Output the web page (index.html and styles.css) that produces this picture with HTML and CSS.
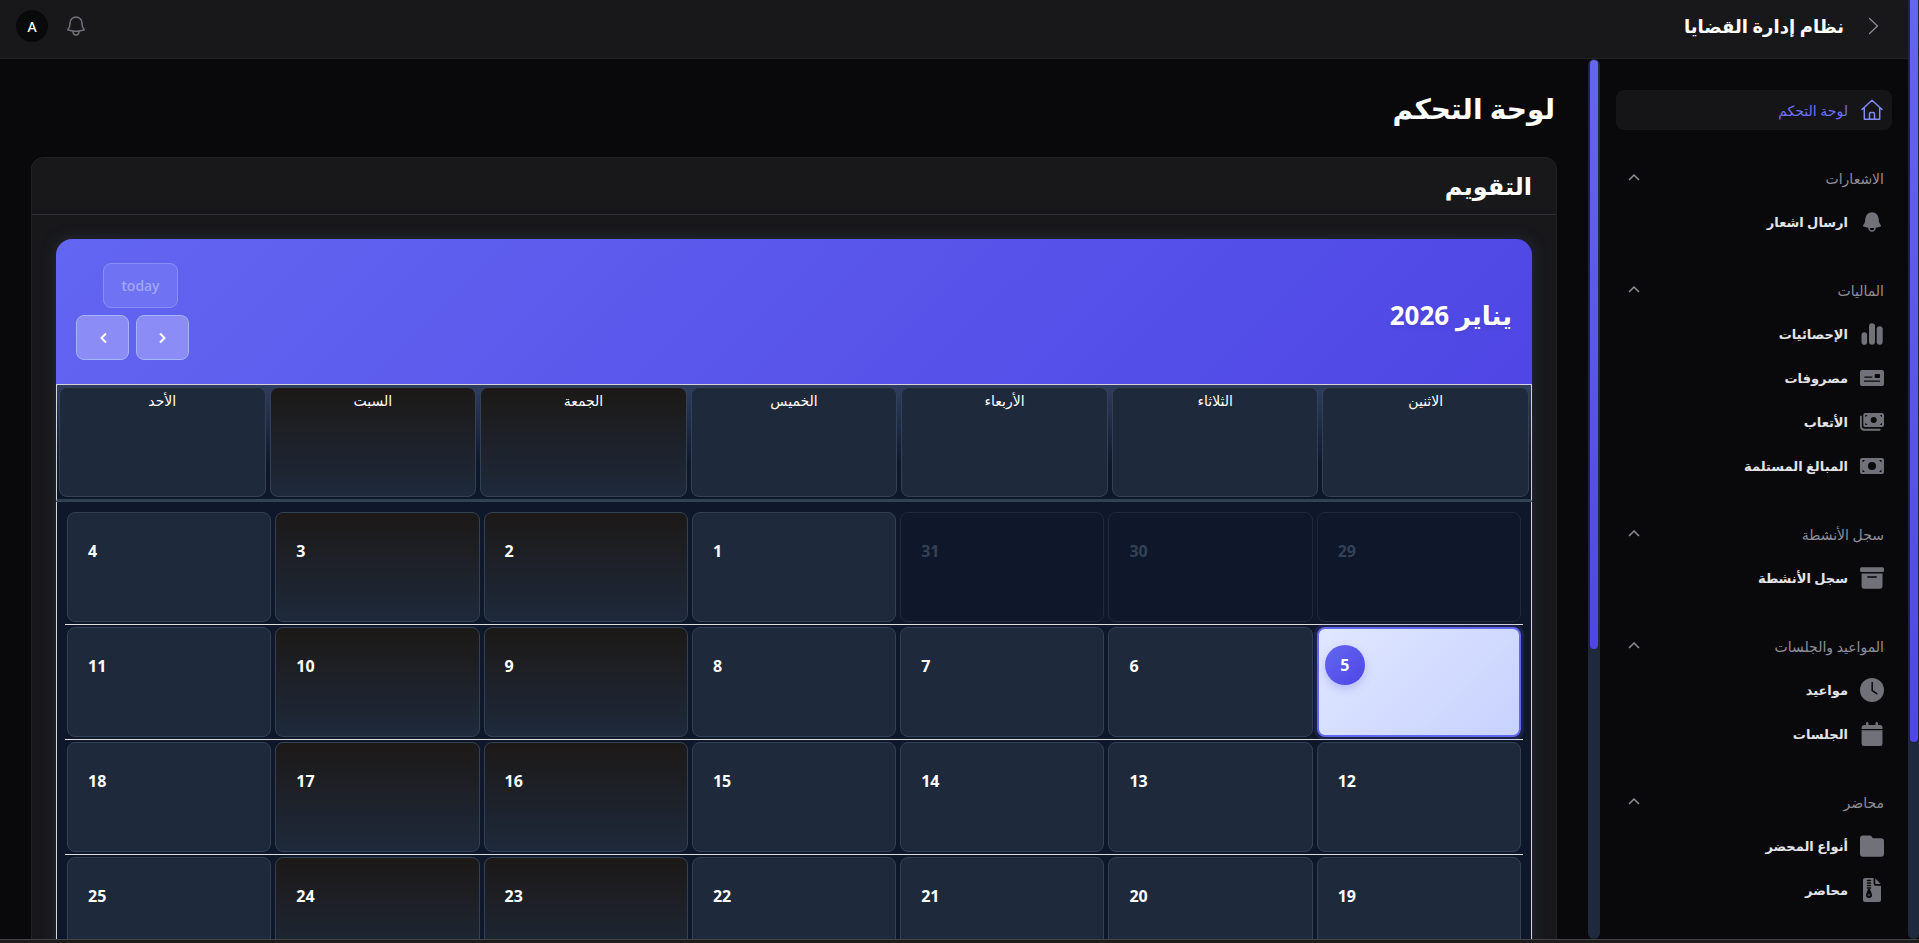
FILE: index.html
```html
<!DOCTYPE html>
<html lang="ar" dir="rtl">
<head>
<meta charset="utf-8">
<meta name="viewport" content="width=device-width, initial-scale=1">
<title>لوحة التحكم</title>
<link rel="stylesheet" href="styles.css">
</head>
<body>
<div class="window">
  <div class="scrollbar page-scroll"><div class="thumb"></div></div>
  <div class="page">
    <header class="topbar">
      <button class="icon-btn" type="button" aria-label="طي القائمة"><svg class="icon line thin" viewBox="0 0 24 24"><path d="M7.500 4.500 15.500 12 7.500 19.500"/></svg></button>
      <a class="brand" href="#">نظام إدارة القضايا</a>
      <div class="spacer"></div>
      <button class="icon-btn" type="button" aria-label="الاشعارات"><svg class="icon line" viewBox="0 0 24 24"><path d="M14.857 17.082a23.848 23.848 0 0 0 5.454-1.310A8.967 8.967 0 0 1 18 9.750V9A6 6 0 0 0 6 9v.75a8.967 8.967 0 0 1-2.312 6.022c1.733.64 3.560 1.085 5.455 1.310m5.714 0a24.255 24.255 0 0 1-5.714 0m5.714 0a3 3 0 1 1-5.714 0"/></svg></button>
      <button class="avatar" type="button">A</button>
    </header>
    <div class="columns">
      <aside class="sidebar">
        <nav class="nav">
          <a class="item active" href="#"><svg class="icon line" viewBox="0 0 24 24"><path d="M2 11.500 12 2.200l10 9.300M4.300 9.800v11.500h15.400V9.800M9.500 21v-5q0-1.600 1.600-1.600h1.800q1.600 0 1.600 1.600v5"/></svg>لوحة التحكم</a>
          <section class="group">
            <button class="label" type="button">الاشعارات<svg class="chev" viewBox="0 0 20 20"><path d="M5 12l5-5 5 5"/></svg></button>
            <a class="item" href="#"><svg class="icon" viewBox="0 0 24 24"><path fill-rule="evenodd" d="M5.250 9a6.750 6.750 0 0 1 13.500 0v.75c0 2.123.8 4.057 2.118 5.520a.75.75 0 0 1-.297 1.206c-1.544.57-3.160.99-4.831 1.243a3.750 3.750 0 1 1-7.480 0 24.585 24.585 0 0 1-4.831-1.244.75.75 0 0 1-.298-1.205A8.217 8.217 0 0 0 5.250 9.750V9Zm4.502 8.900a2.250 2.250 0 1 0 4.496 0 25.057 25.057 0 0 1-4.496 0Z"/></svg>ارسال اشعار</a>
          </section>
          <section class="group">
            <button class="label" type="button">الماليات<svg class="chev" viewBox="0 0 20 20"><path d="M5 12l5-5 5 5"/></svg></button>
            <a class="item" href="#"><svg class="icon" viewBox="0 0 24 24"><rect x="1.500" y="10.200" width="5.600" height="12.500" rx="2.800"/><rect x="9" y="1.300" width="6" height="21.400" rx="3"/><rect x="16.700" y="4.200" width="6" height="18.500" rx="3"/></svg>الإحصائيات</a>
            <a class="item" href="#"><svg class="icon" viewBox="0 0 24 24"><path fill-rule="evenodd" d="M2 4h20q2 0 2 2v12q0 2-2 2H2q-2 0-2-2V6q0-2 2-2zM14.700 8.700v2.600q0 .7.7.7h3.900q.7 0 .7-.7V8.700q0-.7-.7-.7h-3.900q-.7 0-.7.7zM4.300 10.500v1.200h8v-1.200zM4 14.500v1.200h16v-1.200z"/></svg>مصروفات</a>
            <a class="item" href="#"><svg class="icon" viewBox="0 0 24 24"><path fill-rule="evenodd" d="M5.300 3H22q2 0 2 2v10q0 2-2 2H5.300q-2 0-2-2V5q0-2 2-2zM13.700 7a3 3 0 1 0 0 6 3 3 0 0 0 0-6zM5.300 5v2.200L7.500 5zM22 5v2.200L19.800 5zM5.300 15v-2.200L7.500 15zM22 15v-2.200L19.800 15z"/><path d="M0 6.500q0-1 .9-1t.9 1v9.500q0 2.800 2.800 2.800h15q1 0 1 1t-1 1h-15Q0 20.800 0 16z"/></svg>الأتعاب</a>
            <a class="item" href="#"><svg class="icon" viewBox="0 0 24 24"><path fill-rule="evenodd" d="M2 4h20q2 0 2 2v12q0 2-2 2H2q-2 0-2-2V6q0-2 2-2zM12 8a4 4 0 1 0 0 8 4 4 0 0 0 0-8zM2.500 6v2.500L5 6zM21.500 6v2.500L19 6zM2.500 18v-2.500L5 18zM21.500 18v-2.500L19 18z"/></svg>المبالغ المستلمة</a>
          </section>
          <section class="group">
            <button class="label" type="button">سجل الأنشطة<svg class="chev" viewBox="0 0 20 20"><path d="M5 12l5-5 5 5"/></svg></button>
            <a class="item" href="#"><svg class="icon" viewBox="0 0 24 24"><rect y="1.300" width="24" height="4.700" rx="1.500"/><path fill-rule="evenodd" d="M1.600 7.400h20.900V20q0 2.700-2.700 2.700H4.300q-2.700 0-2.700-2.700zM7.800 10.300q-.7 0-.7.7t.7.7h8.500q.7 0 .7-.7t-.7-.7z"/></svg>سجل الأنشطة</a>
          </section>
          <section class="group">
            <button class="label" type="button">المواعيد والجلسات<svg class="chev" viewBox="0 0 20 20"><path d="M5 12l5-5 5 5"/></svg></button>
            <a class="item" href="#"><svg class="icon" viewBox="0 0 24 24"><circle cx="12" cy="12" r="12"/><path class="cut" d="M12.200 4.500v8l4.600 3.200"/></svg>مواعيد</a>
            <a class="item" href="#"><svg class="icon" viewBox="0 0 24 24"><path d="M1.600 6.900V5.500Q1.600 3 4 3h2V1q0-1 1.200-1t1.300 1v2h7V1q0-1 1.200-1T18 1v2h2q2.500 0 2.500 2.500v1.400zM1.600 8.200h20.900V21.500Q22.500 24 20 24H4q-2.400 0-2.400-2.500z"/></svg>الجلسات</a>
          </section>
          <section class="group">
            <button class="label" type="button">محاضر<svg class="chev" viewBox="0 0 20 20"><path d="M5 12l5-5 5 5"/></svg></button>
            <a class="item" href="#"><svg class="icon" viewBox="0 0 24 24"><path d="M0 4.500q0-3 3-3h6.500q1.500 0 2.300 1.300l1 1.500H21q3 0 3 3V20q0 2.700-3 2.700H3q-3 0-3-2.700z"/></svg>أنواع المحضر</a>
            <a class="item" href="#"><svg class="icon" viewBox="0 0 24 24"><path d="M5.300 0h8.300v5.500q0 2.200 2.200 2.200H21V22q0 2-2 2H5q-2 0-2-2V2q0-2 2.300-2zM15.200.3 20.700 6H16q-.8 0-.8-.8z"/><path class="cut" d="M7.500 2.500h3M7.500 5h3M7.500 7.500h3M7.500 10h3"/><path class="hole" fill-rule="evenodd" d="M8 11h2l2 5.500q.5 3.200-3 3.500-3.500-.3-3-3.500zM7.700 16.500h2.600v1H7.700z"/></svg>محاضر</a>
          </section>
        </nav>
        <div class="scrollbar side-scroll"><div class="thumb"></div></div>
      </aside>
      <main class="main">
        <h1 class="title">لوحة التحكم</h1>
        <section class="card">
          <h2 class="card-head">التقويم</h2>
          <div class="card-body">
            <div class="calendar">
              <div class="toolbar">
                <h3 class="month">يناير 2026</h3>
                <div class="controls">
                  <button class="btn today-btn" type="button" disabled>today</button>
                  <div class="pair">
                    <button class="btn" type="button" aria-label="التالي"><svg class="arrow" viewBox="0 0 16 16"><path d="m5 3.500 4.500 4.500L5 12.500"/></svg></button>
                    <button class="btn" type="button" aria-label="السابق"><svg class="arrow" viewBox="0 0 16 16"><path d="M11 3.500 6.500 8l4.500 4.500"/></svg></button>
                  </div>
                </div>
              </div>
              <table class="week">
                <tr><th><div class="cell">الاثنين</div></th><th><div class="cell">الثلاثاء</div></th><th><div class="cell">الأربعاء</div></th><th><div class="cell">الخميس</div></th><th><div class="cell weekend">الجمعة</div></th><th><div class="cell weekend">السبت</div></th><th><div class="cell">الأحد</div></th></tr>
              </table>
              <div class="days-wrap">
                <table class="days">
                  <tr><td><div class="cell other">29</div></td><td><div class="cell other">30</div></td><td><div class="cell other">31</div></td><td><div class="cell">1</div></td><td><div class="cell weekend">2</div></td><td><div class="cell weekend">3</div></td><td><div class="cell">4</div></td></tr>
                  <tr><td><div class="cell today"><span class="dot">5</span></div></td><td><div class="cell">6</div></td><td><div class="cell">7</div></td><td><div class="cell">8</div></td><td><div class="cell weekend">9</div></td><td><div class="cell weekend">10</div></td><td><div class="cell">11</div></td></tr>
                  <tr><td><div class="cell">12</div></td><td><div class="cell">13</div></td><td><div class="cell">14</div></td><td><div class="cell">15</div></td><td><div class="cell weekend">16</div></td><td><div class="cell weekend">17</div></td><td><div class="cell">18</div></td></tr>
                  <tr><td><div class="cell">19</div></td><td><div class="cell">20</div></td><td><div class="cell">21</div></td><td><div class="cell">22</div></td><td><div class="cell weekend">23</div></td><td><div class="cell weekend">24</div></td><td><div class="cell">25</div></td></tr>
                </table>
              </div>
            </div>
          </div>
        </section>
      </main>
    </div>
  </div>
</div>
<div class="strip"></div>
</body>
</html>
```
FILE: styles.css
```css
* { box-sizing: border-box; }
body {
  margin: 0;
  height: 100vh;
  overflow: hidden;
  display: flex;
  flex-direction: column;
  background: #09090b;
  color: #fff;
  font-family: "Noto Sans", "DejaVu Sans", sans-serif;
  font-size: 14px;
}
button { font: inherit; color: inherit; background: none; border: 0; padding: 0; }
a { color: inherit; text-decoration: none; }
h1, h2, h3 { margin: 0; font-weight: 700; }

.window { flex: 1; min-height: 0; display: flex; }
.strip { height: 4px; background: #1e1c1c; border-top: 1px solid #444; }
.page { flex: 1; min-width: 0; display: flex; flex-direction: column; }

.scrollbar { flex: none; width: 12px; padding: 0 2px; background: #1e293b; border-radius: 6px; }
.thumb { height: 67%; border-radius: 4px; background: linear-gradient(#6366f1, #4f46e5); }
.page-scroll { width: 11px; padding-inline: 1px 2px; border-radius: 0 0 6px 6px; }
.page-scroll .thumb { height: 79%; border-radius: 0 0 4px 4px; }
.side-scroll { padding-top: 1px; }

.topbar {
  flex: none;
  height: 59px;
  padding: 0 22px 6px 16px;
  display: flex;
  align-items: center;
  background: #18181b;
  border-bottom: 1px solid #222225;
}
.brand { margin-right: 18px; font-size: 18px; font-weight: 700; }
.spacer { flex: 1; }
.icon-btn { display: flex; color: #71717a; }
.avatar { width: 32px; height: 32px; margin-right: 16px; border-radius: 50%; background: #09090b; color: #fff; font-weight: 500; }
.icon { flex: none; width: 24px; height: 24px; fill: currentColor; }
.line { fill: none; stroke: currentColor; stroke-width: 1.5; stroke-linecap: round; stroke-linejoin: round; }
.thin { stroke: #8f8f98; stroke-width: 1.2; }
.cut { fill: none; stroke: #09090b; stroke-width: 1.5; stroke-linecap: round; }
.hole { fill: #09090b; }

.columns { flex: 1; min-height: 0; display: flex; }
.sidebar { flex: none; width: 320px; display: flex; overflow: hidden; }
.nav { flex: 1; padding: 31px 16px 0; display: flex; flex-direction: column; gap: 28px; }
.group { display: flex; flex-direction: column; gap: 4px; }
.item, .label { flex: none; height: 40px; padding: 0 8px; display: flex; align-items: center; border-radius: 8px; font-size: 14px; }
.item { gap: 12px; font-size: 13px; font-weight: 600; color: #e4e4e7; }
.item .icon { color: #71717a; }
.item.active { background: #151517; color: #6f71f4; font-size: 14px; font-weight: 500; }
.active .icon { color: #818cf8; }
.label { justify-content: space-between; color: #8f8f98; font-weight: 500; }
.chev { width: 20px; height: 20px; fill: none; stroke: #8f8f98; stroke-width: 1.5; }

.main { flex: 1; min-width: 0; padding: 0 31px; overflow: hidden; }
.title { height: 98px; padding: 29px 2px 0; font-size: 28px; line-height: 40px; }
.card { border: 1px solid #222225; border-radius: 12px; background: #18181b; }
.card-head { height: 57px; padding: 0 24px; font-size: 24px; line-height: 56px; border-bottom: 1px solid #303034; }
.card-body { padding: 24px; }
.calendar { border-radius: 16px 16px 0 0; box-shadow: 0 0 14px rgba(51, 65, 85, 0.5); }
.toolbar {
  padding: 24px 20px;
  display: flex;
  align-items: center;
  justify-content: space-between;
  border-radius: 16px 16px 0 0;
  background: linear-gradient(135deg, #6366f1, #4f46e5);
}
.month { padding-top: 6px; font-size: 26px; text-shadow: 0 2px 4px rgba(0, 0, 0, 0.1); }
.controls { display: flex; flex-direction: column; align-items: center; gap: 7px; }
.pair { display: flex; gap: 7px; }
.btn {
  width: 53px;
  height: 45px;
  display: flex;
  align-items: center;
  justify-content: center;
  border: 1px solid #a5b4fc;
  border-radius: 8px;
  background: #8b8cf6;
}
.today-btn { width: 75px; margin-left: 16px; color: #a3a8fa; font-weight: 500; background: #6f72f3; border-color: #898df7; }
.arrow { width: 16px; height: 16px; fill: none; stroke: #fff; stroke-width: 2; }

table { width: 100%; table-layout: fixed; border-collapse: separate; border-spacing: 0; }
th, td { padding: 2px; font-weight: 500; }
.week { border: 1px solid #d4d4d8; border-bottom: 3px solid #334155; background: linear-gradient(#2f3d60, #0f172a 70%); }
.days-wrap { padding: 8px; border: solid #d4d4d8; border-width: 0 1px; background: #0f172a; }
.cell { height: 110px; border: 1px solid #334155; border-radius: 8px; background: #1e293b; }
.week .cell { line-height: 26px; text-align: center; }
.days td { border-bottom: 1px solid #ddd; }
.days .cell { padding: 26px 20px; font-size: 16px; font-weight: 700; line-height: 24px; text-align: left; }
.cell.weekend { background: linear-gradient(#1c1917, #1e293b); }
.cell.other { background: #0f172a; border-color: #1e293b; color: #334155; }
.days .today { padding: 16px 6px; border: 2px solid #6366f1; background: linear-gradient(135deg, #e0e7ff, #c7d2fe); box-shadow: 0 0 0 3px rgba(99, 102, 241, 0.15); direction: ltr; }
.dot { display: block; width: 40px; line-height: 40px; text-align: center; border-radius: 50%; background: linear-gradient(135deg, #6366f1, #4f46e5); box-shadow: 0 4px 8px rgba(99, 102, 241, 0.3); }
```
